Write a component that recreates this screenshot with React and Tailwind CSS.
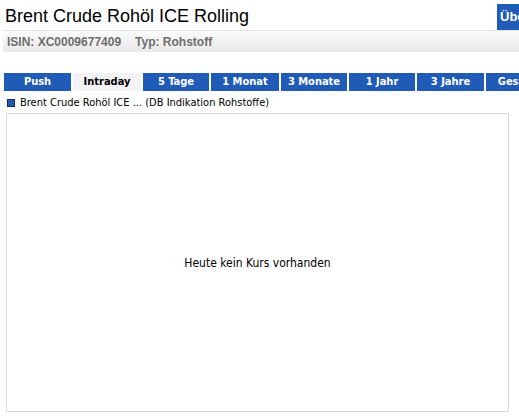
export default function App() {
  const tabs = [
    { label: "Push", w: "w-[67px]", active: false },
    { label: "Intraday", w: "w-[68px]", active: true },
    { label: "5 Tage", w: "w-[66px]", active: false },
    { label: "1 Monat", w: "w-[68px]", active: false },
    { label: "3 Monate", w: "w-[66px]", active: false },
    { label: "1 Jahr", w: "w-[66px]", active: false },
    { label: "3 Jahre", w: "w-[67px]", active: false },
    { label: "Gesamt", w: "w-[66px]", active: false },
  ];
  return (
    <div className="w-[519px] h-[419px] overflow-hidden bg-white relative">
      <div className="flex items-start h-[30px]">
        <h1 className="pl-[5px] pt-[5px] text-[18px] leading-[22px] text-black font-['Liberation_Sans',Arial,sans-serif] whitespace-nowrap flex-1">
          Brent Crude Rohöl ICE Rolling
        </h1>
        <div className="mt-[4px] h-[26px] w-[22px] bg-[#1f5bb7] text-white font-bold text-[13px] leading-[26px] pl-[3px] overflow-hidden font-['Liberation_Sans',Arial,sans-serif] whitespace-nowrap">
          Überblick
        </div>
      </div>
      <div className="ml-[3px] h-[22px] border-t border-[#e4e4e4] bg-gradient-to-b from-[#fbfbfb] to-[#e9e9e9] flex items-center pl-[4px] gap-[14px] text-[12px] font-bold text-[#6e6e6e] font-['Liberation_Sans',Arial,sans-serif]">
        <span>ISIN: XC0009677409</span>
        <span>Typ: Rohstoff</span>
      </div>
      <div className="mt-[21px] ml-[4px] flex gap-[2px] h-[18px] whitespace-nowrap">
        {tabs.map((t) => (
          <div
            key={t.label}
            className={`${t.w} shrink-0 overflow-hidden flex items-center justify-center text-[11px] font-bold font-['DejaVu_Sans_Condensed','DejaVu_Sans',sans-serif] ${
              t.active ? "bg-[#f3f3f3] text-black" : "bg-[#1f5bb7] text-white"
            }`}
          >
            {t.label}
          </div>
        ))}
      </div>
      <div className="mt-[5px] ml-[7px] flex items-center gap-[5px] h-[14px]">
        <span className="w-[8px] h-[8px] bg-[#1f5bb7] border border-[#1a2a4a] shrink-0"></span>
        <span className="text-[11px] text-black font-['DejaVu_Sans_Condensed','DejaVu_Sans',sans-serif] whitespace-nowrap">
          Brent Crude Rohöl ICE ... (DB Indikation Rohstoffe)
        </span>
      </div>
      <div className="mt-[3px] ml-[6px] w-[503px] h-[299px] border border-[#d8d8d8] flex items-center justify-center">
        <span className="text-[12px] text-black font-['DejaVu_Sans_Condensed','DejaVu_Sans',sans-serif]">
          Heute kein Kurs vorhanden
        </span>
      </div>
    </div>
  );
}
